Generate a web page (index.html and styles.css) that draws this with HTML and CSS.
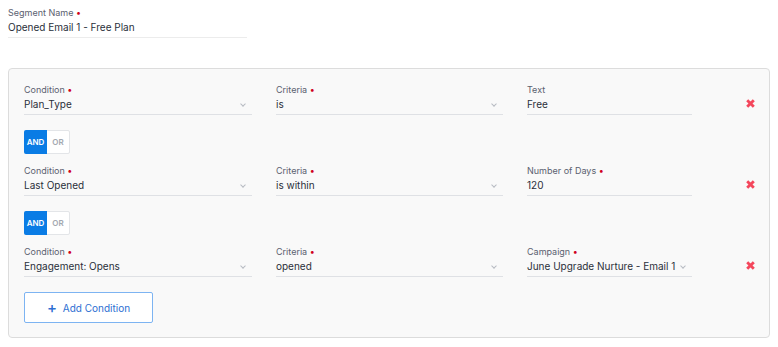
FILE: index.html
```html
<!DOCTYPE html>
<html lang="en">
<head>
    <meta charset="UTF-8">
    <title>Segment Editor</title>
    <link rel="stylesheet" href="styles.css">
</head>
<body>

<div class="segment-name">
    <div class="label">Segment Name <span class="req">&#8226;</span></div>
    <div class="value">Opened Email 1 - Free Plan</div>
</div>

<div class="panel">
    <div class="cond-row">
        <div class="field">
            <div class="label">Condition <span class="req">&#8226;</span></div>
            <div class="value select">Plan_Type</div>
        </div>
        <div class="field">
            <div class="label">Criteria <span class="req">&#8226;</span></div>
            <div class="value select">is</div>
        </div>
        <div class="field">
            <div class="label">Text</div>
            <div class="value">Free</div>
        </div>
        <svg class="remove" viewBox="0 0 10 10"><path d="M2 2L8 8M8 2L2 8"/></svg>
    </div>

    <div class="toggle"><span class="on">AND</span><span>OR</span></div>

    <div class="cond-row">
        <div class="field">
            <div class="label">Condition <span class="req">&#8226;</span></div>
            <div class="value select">Last Opened</div>
        </div>
        <div class="field">
            <div class="label">Criteria <span class="req">&#8226;</span></div>
            <div class="value select">is within</div>
        </div>
        <div class="field">
            <div class="label">Number of Days <span class="req">&#8226;</span></div>
            <div class="value">120</div>
        </div>
        <svg class="remove" viewBox="0 0 10 10"><path d="M2 2L8 8M8 2L2 8"/></svg>
    </div>

    <div class="toggle"><span class="on">AND</span><span>OR</span></div>

    <div class="cond-row">
        <div class="field">
            <div class="label">Condition <span class="req">&#8226;</span></div>
            <div class="value select">Engagement: Opens</div>
        </div>
        <div class="field">
            <div class="label">Criteria <span class="req">&#8226;</span></div>
            <div class="value select">opened</div>
        </div>
        <div class="field">
            <div class="label">Campaign <span class="req">&#8226;</span></div>
            <div class="value select">June Upgrade Nurture - Email 1</div>
        </div>
        <svg class="remove" viewBox="0 0 10 10"><path d="M2 2L8 8M8 2L2 8"/></svg>
    </div>

    <button class="add-btn"><span class="plus">+</span> Add Condition</button>
</div>

</body>
</html>
```

FILE: styles.css
```css
body {
    font-family: Inter, "Noto Sans", sans-serif;
    background-color: #ffffff;
    color: #2a2f3a;
    margin: 0;
    padding: 7px 8px 8px;
}

.label {
    font-size: 9px;
    line-height: 12px;
    color: #5b6170;
}

.req {
    color: #d0021b;
    font-size: 9px;
}

.value {
    font-size: 10px;
    line-height: 14px;
    padding: 1px 0 3px;
    border-bottom: 1px solid #dfe1e5;
    position: relative;
}

.segment-name {
    width: 239px;
}

.segment-name .value {
    border-bottom-color: #ececec;
}

.panel {
    margin-top: 30px;
    width: 730px;
    background-color: #f9f9f9;
    border: 1px solid #dcdcdc;
    border-radius: 4px;
    padding: 15px 15px 14px;
}

.cond-row {
    display: grid;
    grid-template-columns: 228px 227px 165px 1fr;
    column-gap: 24px;
    align-items: end;
}

.select::after {
    content: "";
    position: absolute;
    right: 7px;
    top: 6px;
    width: 3px;
    height: 3px;
    border-right: 1px solid #b7bbc2;
    border-bottom: 1px solid #b7bbc2;
    transform: rotate(45deg);
}

.remove {
    width: 11px;
    height: 11px;
    margin: 0 0 6px 29px;
    stroke: #f4475c;
    stroke-width: 2.6;
    fill: none;
}

.toggle {
    display: inline-flex;
    margin: 15px 0 11px;
    border: 1px solid #e3e5e8;
    border-radius: 2px;
    background-color: #ffffff;
    font-size: 8px;
    font-weight: 600;
}

.toggle span {
    width: 22px;
    height: 22px;
    line-height: 22px;
    text-align: center;
    color: #a3a8b0;
}

.toggle .on {
    background-color: #0a7ce5;
    color: #ffffff;
    margin: -1px 0 -1px -1px;
    height: 24px;
    line-height: 24px;
    width: 23px;
    border-radius: 2px 0 0 2px;
}

.add-btn {
    display: block;
    margin-top: 15px;
    width: 129px;
    height: 31px;
    background-color: #ffffff;
    border: 1px solid #7db4f2;
    border-radius: 2px;
    color: #2d6fd2;
    font-family: Inter, "Noto Sans", sans-serif;
    font-size: 10px;
    cursor: pointer;
}

.add-btn .plus {
    font-size: 15px;
    font-weight: 500;
    vertical-align: -1px;
    margin-right: 3px;
}
```
